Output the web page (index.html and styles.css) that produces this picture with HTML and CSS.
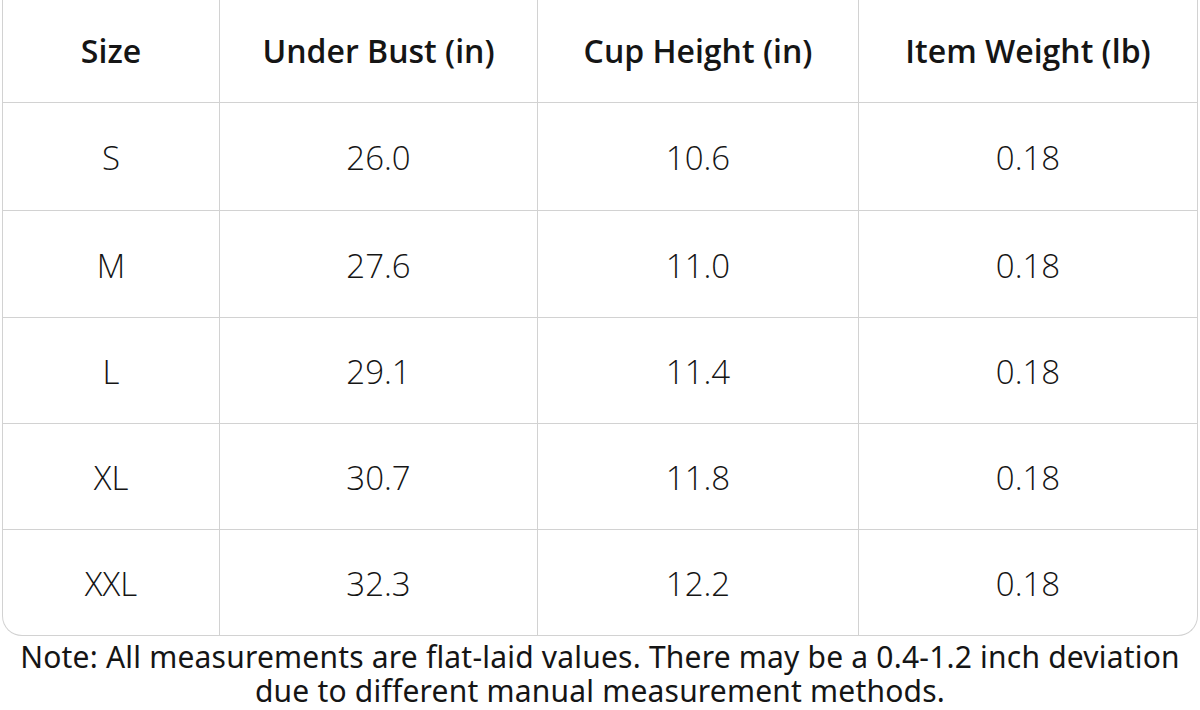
FILE: index.html
```html
<!DOCTYPE html>
<html>
<head>
<meta charset="utf-8">
<link rel="stylesheet" href="styles.css">
</head>
<body>
<div class="page">
  <div class="table">
    <div class="row head">
      <div class="cell">Size</div>
      <div class="cell">Under Bust (in)</div>
      <div class="cell">Cup Height (in)</div>
      <div class="cell">Item Weight (lb)</div>
    </div>
    <div class="row r1">
      <div class="cell">S</div>
      <div class="cell">26.0</div>
      <div class="cell">10.6</div>
      <div class="cell">0.18</div>
    </div>
    <div class="row r2">
      <div class="cell">M</div>
      <div class="cell">27.6</div>
      <div class="cell">11.0</div>
      <div class="cell">0.18</div>
    </div>
    <div class="row">
      <div class="cell">L</div>
      <div class="cell">29.1</div>
      <div class="cell">11.4</div>
      <div class="cell">0.18</div>
    </div>
    <div class="row">
      <div class="cell">XL</div>
      <div class="cell">30.7</div>
      <div class="cell">11.8</div>
      <div class="cell">0.18</div>
    </div>
    <div class="row last">
      <div class="cell">XXL</div>
      <div class="cell">32.3</div>
      <div class="cell">12.2</div>
      <div class="cell">0.18</div>
    </div>
  </div>
  <p class="note">Note: All measurements are flat-laid values. There may be a 0.4-1.2 inch deviation<br>due to different manual measurement methods.</p>
</div>
</body>
</html>
```

FILE: styles.css
```css
html, body {
  margin: 0;
  padding: 0;
  background: #ffffff;
}
.page {
  width: 1200px;
  padding: 0 2px 0 2px;
  box-sizing: border-box;
}
.table {
  border: 1px solid #d2d2d2;
  border-top: none;
  border-radius: 0 0 20px 20px;
  overflow: hidden;
  font-family: "Open Sans", "Noto Sans", sans-serif;
  color: #151515;
}
.row {
  display: grid;
  grid-template-columns: 216px 318px 321px 1fr;
  height: 106px;
  box-sizing: border-box;
  border-top: 1px solid #d2d2d2;
}
.row.head {
  height: 102px;
  border-top: none;
}
.row.r1 {
  height: 108px;
}
.row.r2 {
  height: 107px;
}
.row .cell {
  display: flex;
  align-items: center;
  justify-content: center;
  border-left: 1px solid #d2d2d2;
  font-size: 33px;
  font-weight: 300;
  padding-top: 2px;
}
.row.head .cell {
  font-size: 32px;
  font-weight: 600;
  padding-top: 0;
  padding-bottom: 2px;
}
.row .cell:first-child {
  border-left: none;
}
.note {
  margin: 0;
  padding: 4px 0 0 0;
  text-align: center;
  font-family: "Noto Sans", "Open Sans", sans-serif;
  font-size: 30px;
  line-height: 34px;
  letter-spacing: 0.2px;
  color: #151515;
  white-space: nowrap;
}
```
